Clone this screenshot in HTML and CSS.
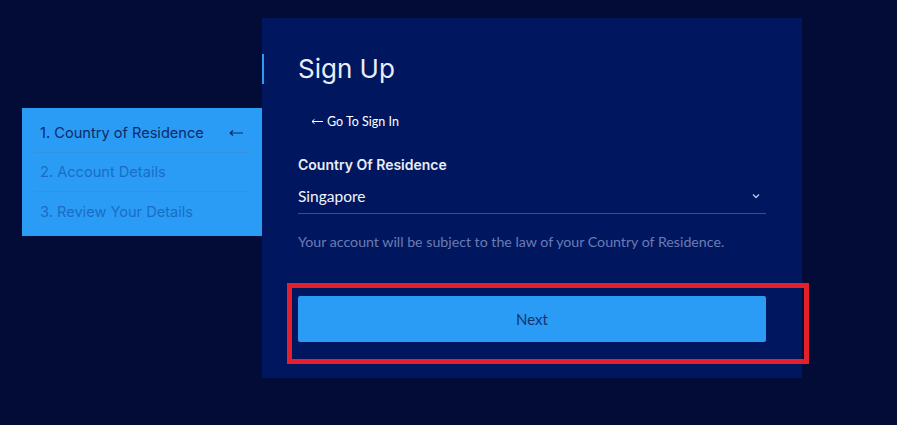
FILE: index.html
```html
<!DOCTYPE html>
<html>

<head>
  <link rel="stylesheet" href="styles.css">
</head>

<body>

  <div class="page">

    <div class="steps">
      <div class="step active">
        <span>1. Country of Residence</span>
        <svg class="step-arrow" width="14" height="8" viewBox="0 0 14 8">
          <path d="M1 4 H14 M1 4 L4 1.5 M1 4 L4 6.5" fill="none" stroke="#0d2a66" stroke-width="1.2"/>
        </svg>
      </div>
      <div class="step">
        <span>2. Account Details</span>
      </div>
      <div class="step">
        <span>3. Review Your Details</span>
      </div>
    </div>

    <div class="card">
      <h2 class="title">Sign Up</h2>

      <a class="back" href="#">
        <svg width="12" height="7" viewBox="0 0 12 7">
          <path d="M1 3.5 H12 M1 3.5 L3.5 1.3 M1 3.5 L3.5 5.7" fill="none" stroke="#ffffff" stroke-width="1"/>
        </svg>
        <span>Go To Sign In</span>
      </a>

      <label class="label">Country Of Residence</label>
      <div class="select">
        <span>Singapore</span>
        <svg width="8" height="6" viewBox="0 0 8 6">
          <path d="M1 1.5 L4 4.5 L7 1.5" fill="none" stroke="#b8c4ee" stroke-width="1.4"/>
        </svg>
      </div>

      <p class="help">Your account will be subject to the law of your Country of Residence.</p>

      <button class="btn" type="button">Next</button>

      <div class="highlight"></div>
    </div>

  </div>

</body>

</html>
```

FILE: styles.css
```css
html {
  height: 100%;
}

body {
  margin: 0;
  min-height: 100%;
  background-color: #030b37;
  font-family: Inter, "Noto Sans", sans-serif;
}

.page {
  display: flex;
  align-items: flex-start;
  padding: 18px 0 0 22px;
}

/* steps on the left */
.steps {
  width: 240px;
  margin-top: 90px;
  padding: 6px 12px 5px;
  box-sizing: border-box;
  background-color: #2a9cf5;
}

.step {
  display: flex;
  align-items: center;
  justify-content: space-between;
  height: 39px;
  box-sizing: border-box;
  padding: 0 6px;
  border-bottom: 1px solid #3691e0;
  font-size: 14.6px;
  color: #1a6dc6;
}

.step:last-child {
  border-bottom: none;
}

.step.active {
  color: #0d2a66;
}

.step-arrow {
  margin-right: 1px;
}

/* card */
.card {
  position: relative;
  width: 540px;
  padding: 36px;
  box-sizing: border-box;
  background-color: #001760;
}

.title {
  margin: 0 0 0 -36px;
  padding-left: 34px;
  border-left: 2px solid #2a9cf5;
  height: 30px;
  font-size: 26px;
  line-height: 30px;
  font-weight: 400;
  color: #e9edf8;
}

.back {
  display: flex;
  align-items: center;
  gap: 4px;
  margin-top: 29px;
  padding-left: 13px;
  height: 16px;
  font-family: Lato, sans-serif;
  font-size: 12.5px;
  color: #ffffff;
  text-decoration: none;
}

.label {
  display: block;
  margin-top: 27px;
  height: 18px;
  line-height: 18px;
  font-size: 14px;
  font-weight: 600;
  color: #e9edf8;
}

.select {
  display: flex;
  align-items: center;
  justify-content: space-between;
  margin-top: 12px;
  padding: 0 6px 7px 0;
  line-height: 20px;
  border-bottom: 1px solid #3c508f;
  font-family: Lato, sans-serif;
  font-size: 15.5px;
  color: #f2f4fb;
}

.help {
  margin: 19px 0 0;
  line-height: 18px;
  font-family: Lato, sans-serif;
  font-size: 14.2px;
  color: #6b7cb4;
}

.btn {
  display: block;
  width: 100%;
  height: 46px;
  margin-top: 45px;
  padding: 0;
  border: none;
  border-radius: 2px;
  background-color: #2a9cf5;
  font-family: Lato, sans-serif;
  font-size: 15px;
  line-height: 44px;
  color: #14336f;
}

/* annotation box round the button */
.highlight {
  position: absolute;
  left: 25px;
  top: 265px;
  width: 522px;
  height: 81px;
  box-sizing: border-box;
  border: 5px solid #e3202b;
}
```
